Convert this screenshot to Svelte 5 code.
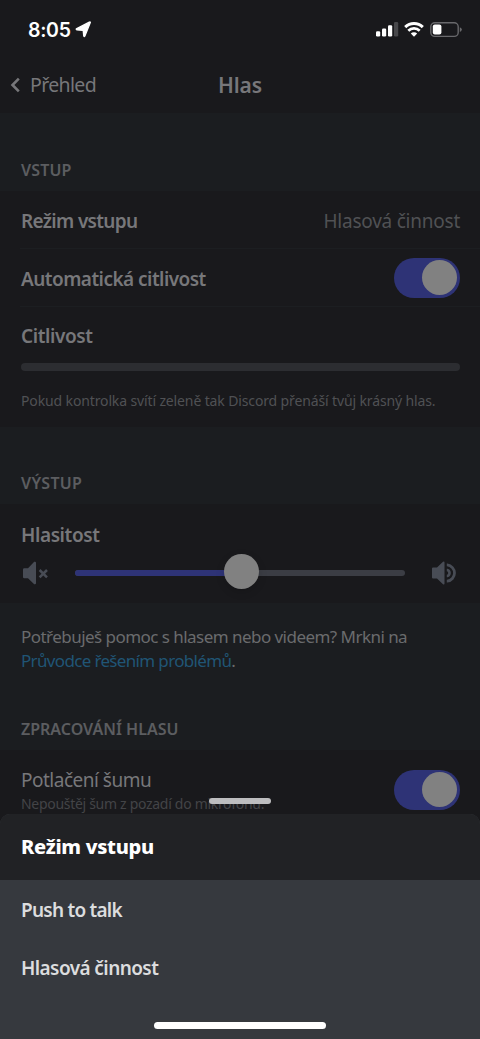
<script>
	let autoSensitivity = true;
	let noiseSuppression = true;
	let volume = 50;

	const modes = ['Push to talk', 'Hlasová činnost'];
</script>

<div class="screen">
	<div class="status">
		<span class="time">8:05</span>
		<svg class="location" width="17" height="17" viewBox="0 0 17 17">
			<path d="M15.3 1.5 9.9 14.9Q9.1 16.4 8.7 14.7L8.2 9.4 2 8.9Q.5 8.3 1.8 7.6L14.3 1.2Q15.6.7 15.3 1.5Z" fill="#fff" stroke="#fff" stroke-width="1.3" stroke-linejoin="round" />
		</svg>
		<svg class="signal" width="23" height="15" viewBox="0 0 23 15">
			<rect x="0" y="9.2" width="4.2" height="5.3" rx="1.2" fill="#fff" />
			<rect x="6" y="6.5" width="4.2" height="8" rx="1.2" fill="#fff" />
			<rect x="12" y="3.3" width="4.2" height="11.2" rx="1.2" fill="#fff" />
			<rect x="18" y="0" width="4.2" height="14.5" rx="1.2" fill="#48484b" />
		</svg>
		<svg class="wifi" width="20" height="15" viewBox="0 0 20 15">
			<path d="M1.2 5.1a12.6 12.6 0 0 1 17.6 0" fill="none" stroke="#fff" stroke-width="3" />
			<path d="M4.3 8.7a8.1 8.1 0 0 1 11.4 0" fill="none" stroke="#fff" stroke-width="2.7" />
			<path d="M10 14.8 6.8 11.5a4.6 4.6 0 0 1 6.4 0Z" fill="#fff" />
		</svg>
		<svg class="battery" width="32" height="16" viewBox="0 0 32 16">
			<rect x=".8" y=".8" width="27.4" height="13.6" rx="4" fill="none" stroke="#69696c" stroke-width="1.4" />
			<rect x="2.8" y="2.6" width="8.6" height="10" rx="2" fill="#fff" />
			<path d="M29.8 5.2q2 .7 2 2.4t-2 2.4z" fill="#69696c" />
		</svg>
	</div>

	<div class="nav">
		<svg width="11" height="16" viewBox="0 0 11 16">
			<path d="M8.8 1.7 2.5 8l6.3 6.3" fill="none" stroke="#77777a" stroke-width="2.6" />
		</svg>
		<span class="back">Přehled</span>
		<h1>Hlas</h1>
	</div>

	<h2 class="heading">VSTUP</h2>
	<div class="group">
		<div class="row line">
			<span class="label mode">Režim vstupu</span>
			<span class="value">Hlasová činnost</span>
		</div>
		<div class="row line">
			<span class="label auto">Automatická citlivost</span>
			<span class="toggle" class:on={autoSensitivity}></span>
		</div>
		<div class="sensitivity">
			<span class="label">Citlivost</span>
			<div class="meter"></div>
			<p class="hint">Pokud kontrolka svítí zeleně tak Discord přenáší tvůj krásný hlas.</p>
		</div>
	</div>

	<h2 class="heading output">VÝSTUP</h2>
	<div class="group volume">
		<span class="label">Hlasitost</span>
		<div class="slider">
			<svg width="27" height="24" viewBox="0 0 27 24">
				<path d="M3.2 7.3H7L13.2.8Q15 .2 15 1.8V22.2Q15 23.7 13.2 23.2L7 17.2H3.2Q2 17.2 2 16V8.5Q2 7.3 3.2 7.3Z" fill="#484c55" />
				<path d="m18.6 9 7.4 7.4m0-7.4-7.4 7.4" stroke="#484c55" stroke-width="2.5" />
			</svg>
			<div class="track">
				<div class="fill" style="width: {volume}%"></div>
				<div class="knob" style="left: {volume}%"></div>
			</div>
			<svg width="27" height="24" viewBox="0 0 27 24">
				<path d="M2 6.5H6L12 .8Q13.5 0 13.5 1.5V22.4Q13.5 24 12 23.2L6 17.5H2Q1 17.5 1 16.5V7.5Q1 6.5 2 6.5Z" fill="#484c55" />
				<path d="M15.8 3.9h.4a8.2 8.2 0 0 1 0 16.3h-.4" fill="none" stroke="#484c55" stroke-width="2.8" />
				<path d="M15.8 9h.4a3.1 3.1 0 0 1 0 6h-.4" fill="none" stroke="#484c55" stroke-width="2.6" />
			</svg>
		</div>
	</div>

	<p class="help">Potřebuješ pomoc s hlasem nebo videem? Mrkni na<br /><span class="link">Průvodce řešením problémů</span>.</p>

	<h2 class="heading processing">ZPRACOVÁNÍ HLASU</h2>
	<div class="group noise">
		<div>
			<div class="title">Potlačení šumu</div>
			<div class="sub">Nepouštěj šum z pozadí do mikrofonu.</div>
		</div>
		<span class="toggle" class:on={noiseSuppression}></span>
	</div>

	<div class="sheet">
		<div class="handle"></div>
		<div class="sheet-head">Režim vstupu</div>
		{#each modes as mode, i}
			<div class="option" class:first={i === 0}>{mode}</div>
		{/each}
		<div class="home"></div>
	</div>
</div>

<style>
	:global(body) {
		background: #1b1d20;
	}
	.screen {
		position: relative;
		width: 480px;
		height: 1039px;
		overflow: hidden;
		background: #1b1d20;
		color: #77777a;
		font-family: 'Noto Sans', 'Open Sans', sans-serif;
		white-space: nowrap;
	}
	.status {
		display: flex;
		align-items: center;
		box-sizing: border-box;
		height: 58px;
		padding: 1px 18px 0 28px;
		background: #19191c;
	}
	.time {
		width: 43px;
		color: #fff;
		font: 600 19.5px/24px Inter, sans-serif;
		letter-spacing: -0.3px;
	}
	.location {
		margin-left: 4px;
	}
	.signal {
		margin-left: auto;
	}
	.wifi {
		margin-left: 5px;
	}
	.battery {
		margin-left: 6px;
	}
	.nav {
		display: grid;
		grid-template-columns: 20px 1fr auto 1fr;
		align-items: center;
		box-sizing: border-box;
		height: 55px;
		padding: 0 10px 2px;
		background: #19191c;
	}
	.back {
		font-size: 19.5px;
		letter-spacing: -0.65px;
	}
	h1 {
		margin: 0;
		padding-right: 20px;
		font-size: 21px;
		font-weight: 600;
		letter-spacing: -0.1px;
	}
	.heading {
		box-sizing: border-box;
		height: 78px;
		margin: 0;
		padding: 46px 21px 0;
		color: #5c5d60;
		font-size: 16px;
		line-height: 22px;
		font-weight: 600;
		letter-spacing: 0.15px;
	}
	.output {
		height: 77px;
		padding-top: 45px;
		letter-spacing: 0.3px;
	}
	.processing {
		height: 43px;
		padding-top: 11px;
		letter-spacing: 0;
	}
	.group {
		background: #19191c;
	}
	.row {
		display: flex;
		align-items: center;
		justify-content: space-between;
		box-sizing: border-box;
		height: 58px;
		padding: 0 20px 0 21px;
	}
	.line {
		background: linear-gradient(#1c1e21, #1c1e21) 20px 100% / 460px 1px no-repeat;
	}
	.label {
		font-size: 19px;
		line-height: 26px;
		font-weight: 600;
		letter-spacing: -0.4px;
	}
	.mode {
		padding-top: 2px;
		letter-spacing: -0.67px;
	}
	.auto {
		padding-top: 1px;
		letter-spacing: -0.54px;
	}
	.value {
		padding-top: 2px;
		color: #505154;
		font-size: 19px;
		letter-spacing: -0.24px;
	}
	.toggle {
		box-sizing: border-box;
		width: 66px;
		height: 40px;
		padding: 2px;
		border-radius: 20px;
		background: #3c3e44;
	}
	.toggle::after {
		content: '';
		display: block;
		width: 35px;
		height: 35px;
		border-radius: 50%;
		background: #818181;
	}
	.toggle.on {
		background: #2e3376;
	}
	.toggle.on::after {
		margin-left: 26px;
	}
	.sensitivity {
		box-sizing: border-box;
		height: 120px;
		padding: 16px 20px 0 21px;
	}
	.sensitivity .label {
		display: block;
	}
	.meter {
		height: 8px;
		margin-top: 14px;
		border-radius: 4px;
		background: #2c2d31;
	}
	.hint {
		margin: 20px 0 0;
		color: #505154;
		font-size: 14px;
		line-height: 20px;
		letter-spacing: -0.13px;
	}
	.volume {
		box-sizing: border-box;
		height: 99px;
		padding: 18px 22px 0 21px;
	}
	.slider {
		display: flex;
		align-items: center;
		justify-content: space-between;
		height: 24px;
		margin-top: 13px;
	}
	.volume .label {
		display: block;
	}
	.track {
		position: relative;
		width: 330px;
		height: 6px;
		border-radius: 3px;
		background: #3b3d44;
	}
	.fill {
		height: 6px;
		border-radius: 3px;
		background: #2e3376;
	}
	.knob {
		position: absolute;
		top: -16px;
		width: 35px;
		height: 35px;
		margin-left: -16px;
		border-radius: 50%;
		background: #818181;
		box-shadow: 0 3px 8px rgb(0 0 0 / 15%);
	}
	.help {
		box-sizing: border-box;
		height: 104px;
		margin: 0;
		padding: 22px 21px 0;
		color: #6a6b6d;
		font-size: 17px;
		line-height: 24px;
		letter-spacing: -0.54px;
	}
	.link {
		color: #205575;
		letter-spacing: -0.66px;
	}
	.noise {
		display: flex;
		align-items: flex-start;
		justify-content: space-between;
		height: 289px;
		padding: 17px 20px 0 21px;
	}
	.noise .toggle {
		margin-top: 3px;
	}
	.title {
		font-size: 19px;
		line-height: 27px;
		letter-spacing: -0.5px;
	}
	.sub {
		color: #434447;
		font-size: 14px;
		line-height: 20px;
		letter-spacing: -0.3px;
	}
	.sheet {
		position: absolute;
		left: 0;
		bottom: 0;
		width: 480px;
		height: 225px;
		border-radius: 10px 10px 0 0;
		background: #36393e;
		color: #dcddde;
	}
	.handle {
		position: absolute;
		top: -16px;
		left: 209px;
		width: 62px;
		height: 6px;
		border-radius: 3px;
		background: #bdbdbf;
	}
	.sheet-head {
		height: 66px;
		padding-left: 21px;
		border-radius: 10px 10px 0 0;
		background: #212225;
		color: #fff;
		font-size: 20px;
		font-weight: 800;
		line-height: 66px;
		letter-spacing: -0.28px;
	}
	.option {
		height: 58px;
		padding-left: 21px;
		font-size: 19px;
		font-weight: 600;
		line-height: 60px;
		letter-spacing: -0.58px;
	}
	.option.first {
		letter-spacing: -0.76px;
	}
	.home {
		position: absolute;
		bottom: 10px;
		left: 154px;
		width: 172px;
		height: 7px;
		border-radius: 4px;
		background: #fff;
	}
</style>
